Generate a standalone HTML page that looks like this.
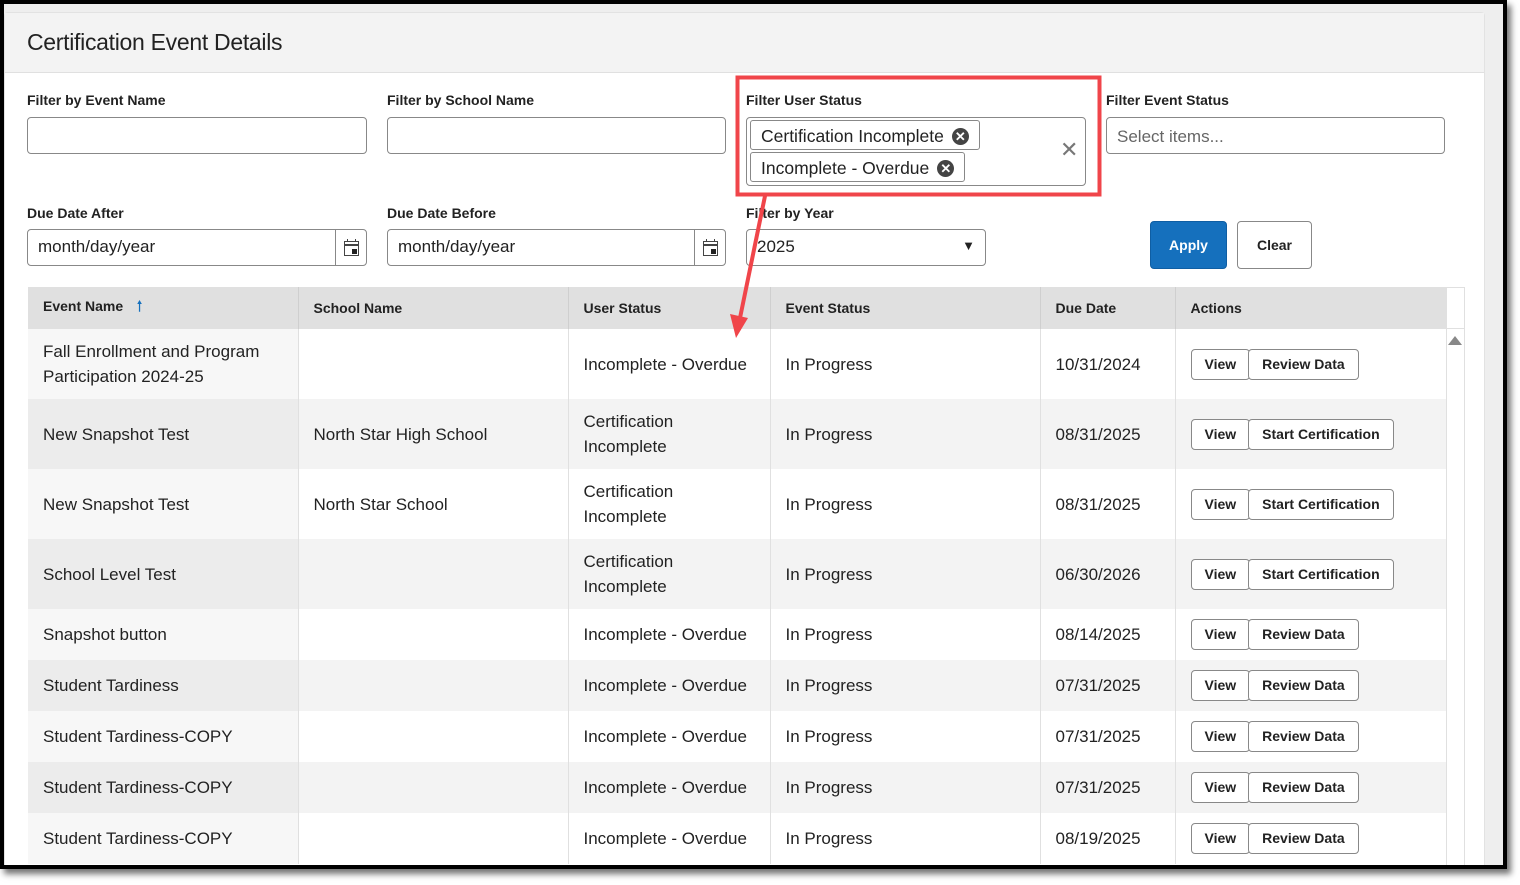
<!DOCTYPE html>
<html><head><meta charset="utf-8"><style>
*{box-sizing:border-box;margin:0;padding:0}
body{width:1520px;height:885px;background:#fff;position:relative;overflow:hidden;font-family:"Liberation Sans",sans-serif;color:#222}
.frame{position:absolute;left:0;top:0;width:1507px;height:869px;border:4px solid #000;border-top-width:4px;background:#eee;box-shadow:4px 5px 6px rgba(0,0,0,.55);overflow:hidden}
.card{position:absolute;left:0;top:8px;width:1481px;height:900px;background:#fff;border:1px solid #e2e2e2;border-radius:4px}
.hdr{position:absolute;left:0;top:0;width:100%;height:60px;background:#f3f3f3;border-bottom:1px solid #e0e0e0}
.hdr h1{position:absolute;left:22px;top:16px;font-weight:normal;font-size:23px;color:#222;letter-spacing:-.3px}
.lbl{position:absolute;font-size:14px;font-weight:bold;color:#222}
.inp{position:absolute;height:37px;border:1px solid #888;border-radius:4px;background:#fff;font-size:17px;padding:9px 10px}
.cal{position:absolute;right:0;top:0;width:31px;height:35px;border-left:1px solid #888}
.chip{position:absolute;height:30px;border:1px solid #888;border-radius:3px;font-size:17.5px;padding:5px 10px;white-space:nowrap}
.x{display:inline-block;width:17px;height:17px;border-radius:50%;background:#444;color:#fff;font-size:13px;line-height:17px;text-align:center;vertical-align:1px;margin-left:8px;font-weight:bold}
.btn{position:absolute;height:48px;border-radius:4px;font-size:14px;font-weight:bold;text-align:center;line-height:46px}
table{position:absolute;left:23px;top:274px;border-collapse:collapse;table-layout:fixed;width:1418px;font-size:17px}
th{background:#e0e0e0;height:42px;text-align:left;font-size:14px;padding-left:15px;border-right:1px solid #cfcfcf}
td{padding-left:15px;border-right:1px solid #e0e0e0;line-height:25px}
tr.w td{background:#fff} tr.g td{background:#f3f3f3}
tr.w td:first-child{background:#f7f7f7} tr.g td:first-child{background:#ececec}
.b{display:inline-block;height:31px;border:1px solid #888;border-radius:4px;font-size:14px;font-weight:bold;line-height:29px;padding:0 13px;background:#fff;margin-right:-2px}
</style></head><body>
<div class="frame">
<div class="card">
<div class="hdr"><h1>Certification Event Details</h1></div>
<div class="lbl" style="left:22px;top:79px">Filter by Event Name</div>
<div class="inp" style="left:22px;top:104px;width:340px"></div>
<div class="lbl" style="left:382px;top:79px">Filter by School Name</div>
<div class="inp" style="left:382px;top:104px;width:339px"></div>
<div class="lbl" style="left:741px;top:79px">Filter User Status</div>
<div class="inp" style="left:741px;top:104px;width:340px;height:69px"></div>
<div class="chip" style="left:745px;top:107px">Certification Incomplete<span class="x">✕</span></div>
<div class="chip" style="left:745px;top:139px">Incomplete - Overdue<span class="x">✕</span></div>
<div style="position:absolute;left:1055px;top:124px;font-size:22px;color:#777">✕</div>
<div class="lbl" style="left:1101px;top:79px">Filter Event Status</div>
<div class="inp" style="left:1101px;top:104px;width:339px;color:#666">Select items...</div>
<div class="lbl" style="left:22px;top:192px">Due Date After</div>
<div class="inp" style="left:22px;top:216px;width:340px;padding-top:7px">month/day/year<div class="cal"><svg width="31" height="35"><rect x="8.5" y="11.5" width="14" height="14" fill="none" stroke="#444"/><line x1="8" y1="15" x2="23" y2="15" stroke="#444" stroke-width="2"/><line x1="11.5" y1="9" x2="11.5" y2="12" stroke="#444"/><line x1="19.5" y1="9" x2="19.5" y2="12" stroke="#444"/><rect x="16" y="19" width="5" height="5" fill="#222"/></svg></div></div>
<div class="lbl" style="left:382px;top:192px">Due Date Before</div>
<div class="inp" style="left:382px;top:216px;width:339px;padding-top:7px">month/day/year<div class="cal"><svg width="31" height="35"><rect x="8.5" y="11.5" width="14" height="14" fill="none" stroke="#444"/><line x1="8" y1="15" x2="23" y2="15" stroke="#444" stroke-width="2"/><line x1="11.5" y1="9" x2="11.5" y2="12" stroke="#444"/><line x1="19.5" y1="9" x2="19.5" y2="12" stroke="#444"/><rect x="16" y="19" width="5" height="5" fill="#222"/></svg></div></div>
<div class="lbl" style="left:741px;top:192px">Filter by Year</div>
<div class="inp" style="left:741px;top:216px;width:240px;padding-top:7px">2025<span style="position:absolute;right:10px;top:8px;font-size:13px">▼</span></div>
<div class="btn" style="left:1145px;top:208px;width:77px;background:#1570bd;color:#fff;border:1px solid #0f5ea3">Apply</div>
<div class="btn" style="left:1232px;top:208px;width:75px;border:1px solid #888;background:#fff">Clear</div>
<div style="position:absolute;left:1441px;top:274px;width:19px;height:600px;border:1px solid #e0e0e0;border-top:none;background:#fff"></div>
<div style="position:absolute;left:1441px;top:274px;width:19px;height:42px;background:#fff;border:1px solid #e0e0e0"></div>
<div style="position:absolute;left:1443px;top:323px;width:0;height:0;border-left:7px solid transparent;border-right:7px solid transparent;border-bottom:9px solid #888"></div>
<table>
<colgroup><col style="width:270px"><col style="width:270px"><col style="width:202px"><col style="width:270px"><col style="width:135px"><col style="width:271px"></colgroup>
<tr><th>Event Name <span style="color:#1570bd;margin-left:10px">🠑</span></th><th>School Name</th><th>User Status</th><th>Event Status</th><th>Due Date</th><th style="border-right:none">Actions</th></tr>
<tr class="w" style="height:70px"><td>Fall Enrollment and Program<br>Participation 2024-25</td><td></td><td>Incomplete - Overdue</td><td>In Progress</td><td>10/31/2024</td><td><span class="b">View</span><span class="b">Review Data</span></td></tr>
<tr class="g" style="height:70px"><td>New Snapshot Test</td><td>North Star High School</td><td>Certification<br>Incomplete</td><td>In Progress</td><td>08/31/2025</td><td><span class="b">View</span><span class="b">Start Certification</span></td></tr>
<tr class="w" style="height:70px"><td>New Snapshot Test</td><td>North Star School</td><td>Certification<br>Incomplete</td><td>In Progress</td><td>08/31/2025</td><td><span class="b">View</span><span class="b">Start Certification</span></td></tr>
<tr class="g" style="height:70px"><td>School Level Test</td><td></td><td>Certification<br>Incomplete</td><td>In Progress</td><td>06/30/2026</td><td><span class="b">View</span><span class="b">Start Certification</span></td></tr>
<tr class="w" style="height:51px"><td>Snapshot button</td><td></td><td>Incomplete - Overdue</td><td>In Progress</td><td>08/14/2025</td><td><span class="b">View</span><span class="b">Review Data</span></td></tr>
<tr class="g" style="height:51px"><td>Student Tardiness</td><td></td><td>Incomplete - Overdue</td><td>In Progress</td><td>07/31/2025</td><td><span class="b">View</span><span class="b">Review Data</span></td></tr>
<tr class="w" style="height:51px"><td>Student Tardiness-COPY</td><td></td><td>Incomplete - Overdue</td><td>In Progress</td><td>07/31/2025</td><td><span class="b">View</span><span class="b">Review Data</span></td></tr>
<tr class="g" style="height:51px"><td>Student Tardiness-COPY</td><td></td><td>Incomplete - Overdue</td><td>In Progress</td><td>07/31/2025</td><td><span class="b">View</span><span class="b">Review Data</span></td></tr>
<tr class="w" style="height:51px"><td>Student Tardiness-COPY</td><td></td><td>Incomplete - Overdue</td><td>In Progress</td><td>08/19/2025</td><td><span class="b">View</span><span class="b">Review Data</span></td></tr>
</table>
</div>
</div>
<svg style="position:absolute;left:0;top:0" width="1520" height="885">
<rect x="737.5" y="77.5" width="362" height="117" fill="none" stroke="#f0454a" stroke-width="4"/>
<line x1="765" y1="196" x2="740" y2="318" stroke="#f0454a" stroke-width="4"/>
<polygon points="730,314 748,318 736,338" fill="#f0454a"/>
</svg>
</body></html>
